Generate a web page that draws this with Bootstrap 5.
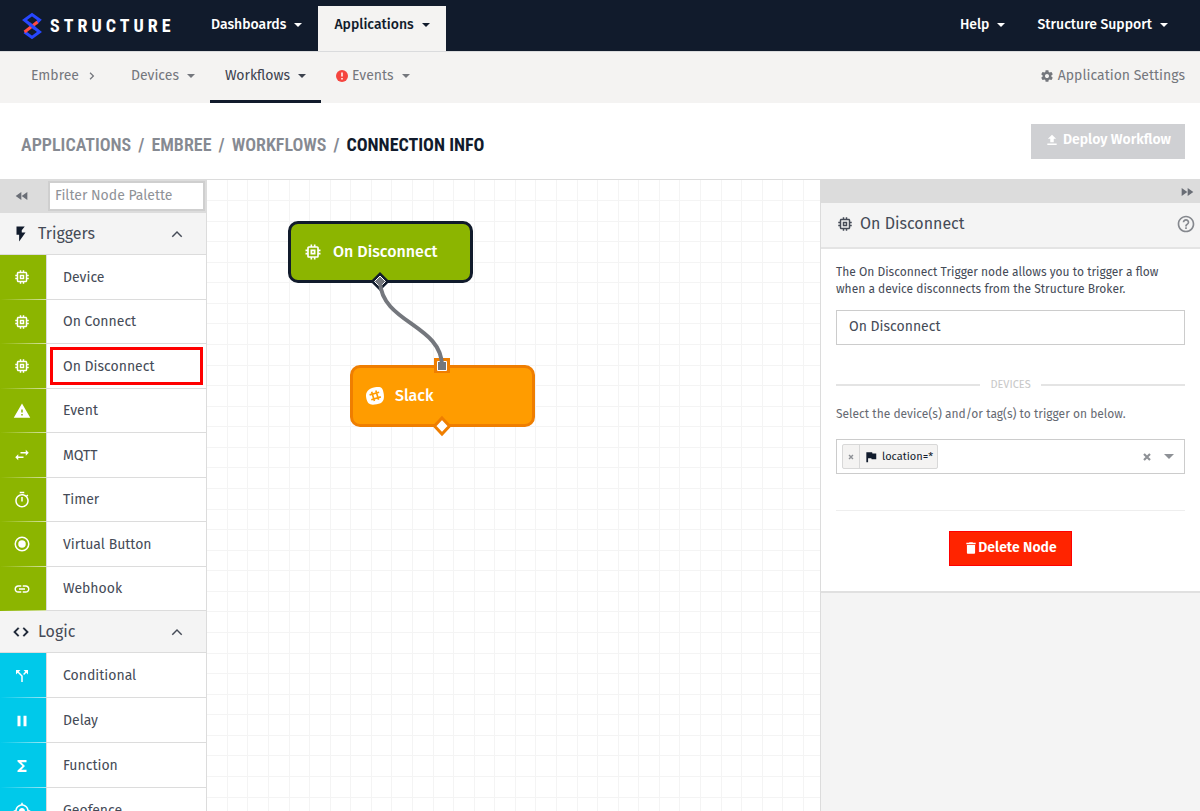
<!DOCTYPE html>
<html lang="en">
<head>
<meta charset="utf-8">
<meta name="viewport" content="width=device-width, initial-scale=1">
<title>Connection Info – Structure</title>
<link href="https://cdn.jsdelivr.net/npm/bootstrap@5.3.0/dist/css/bootstrap.min.css" rel="stylesheet">
<style>
  :root { --ink: #111b2c; --text: #454b57; --line: #dcdcdc; --green: #8cb500; --cyan: #00c9ea; }
  body { font-family: "Fira Sans", "Noto Sans", sans-serif; font-size: 14px; line-height: 20px; color: var(--text); }
  a { color: inherit; text-decoration: none; }
  .icon { width: 18px; height: 18px; fill: currentColor; flex: none; }
  .icon-sm { width: 16px; height: 16px; }
  .icon-xs { width: 14px; height: 14px; }
  .icon-lg { width: 20px; height: 20px; }

  .topbar { height: 51px; background: var(--ink); color: #fff; font-weight: 500; }
  .brand { width: 195px; padding-left: 22px; }
  .brand-name { font-family: "Roboto Condensed", "Roboto", sans-serif; font-weight: 700; font-size: 18px; letter-spacing: 4px; }
  .topbar .nav-link, .subbar .nav-link { padding: 0 15px; color: inherit; display: flex; align-items: center; }
  .topbar .nav-link { height: 45px; padding: 0 16px 8px; }
  .topbar .nav-link.active { background: #f4f3f2; color: var(--ink); }
  .caret::after { content: ""; margin-left: 8px; border: 4px solid transparent; border-top-color: currentColor; border-bottom: 0; }

  .subbar { height: 52px; background: #f4f3f2; color: #74777d; border-top: 1px solid #dadbdd; }
  .subbar .nav-link { height: 51px; border-bottom: 3px solid transparent; }
  .subbar .nav-link.active { color: #3c424e; border-color: var(--ink); }

  .titlebar { height: 76px; padding: 0 15px 0 21px; }
  .trail { font-family: "Roboto Condensed", "Fira Sans Condensed", "Open Sans Condensed", "Fira Sans", "Noto Sans", sans-serif; font-weight: 600; font-size: 18px; color: #868a92; --bs-breadcrumb-divider: "/"; --bs-breadcrumb-item-padding-x: 7px; --bs-breadcrumb-divider-color: #868a92; }
  .trail .active { color: var(--ink); font-weight: 700; }
  .action { border: 0; border-radius: 0; height: 35px; color: #fff; font-size: 14px; font-weight: 600; line-height: 20px; padding: 0 14px 2px; }
  .action-deploy, .action-deploy:disabled { background: #cfd0d3; color: #fff; opacity: 1; }
  .action-delete, .action-delete:hover { background: #ff2400; color: #fff; border: 1px solid #f00; }

  .workspace { border-top: 1px solid var(--line); min-height: 0; }
  .palette { width: 207px; border-right: 1px solid var(--line); }
  .filter { height: 33px; background: #dcdcdc; padding: 1px 1px 2px 0; }
  .toggle { border: 0; background: none; padding: 0; color: #6a6e76; display: inline-flex; }
  .filter .toggle { padding: 0 18px 0 14px; }
  .filter .form-control { height: 30px; padding: 0 6px 2px 5px; border: 2px solid #cfcfcf; border-radius: 0; font-size: 14px; }
  .filter .form-control::placeholder { color: #8f9297; }
  .group-head { height: 42px; background: #f4f4f4; border: 0; border-bottom: 1px solid var(--line); padding: 0 20px 0 12px; font-size: 16px; color: var(--text); }
  .group-head .icon:first-child { color: var(--ink); }
  .triggers .group-list { height: 356px; }
  .tile { flex: 1 0 44px; border-bottom: 1px solid var(--line); }
  .logic .tile { flex-basis: 45px; }
  .tile-icon { width: 47px; color: #fff; margin-bottom: -1px; border-right: 1px solid var(--line); padding-right: 2px; }
  .tile-label { margin: 3px; border: 3px solid transparent; padding: 2px 0 0 10px; }
  .tile-label.marked { border-color: #f00; }
  .triggers .tile-icon { background: linear-gradient(var(--green), var(--green)) top / 100% calc(100% - 1px) no-repeat, linear-gradient(90deg, var(--green), #d5e3a4); }
  .logic .tile-icon { background: linear-gradient(var(--cyan), var(--cyan)) top / 100% calc(100% - 1px) no-repeat, linear-gradient(90deg, var(--cyan), #a4e8f4); }

  .canvas { background: #fff; min-width: 0; }
  .flow-node { width: 185px; height: 62px; border: 3px solid; border-radius: 10px; color: #fff; font-size: 16px; font-weight: 500; padding: 0 12px; gap: 10px; }
  .flow-node .icon { width: 20px; height: 20px; }
  .node-trigger { left: 81px; top: 41px; background: var(--green); border-color: var(--ink); }
  .node-slack { left: 143px; top: 185px; background: #ff9c00; border-color: #ef7e00; }

  .inspector { width: 380px; background: #f4f4f4; border-left: 1px solid var(--line); }
  .inspector-bar { height: 23px; background: #dcdcdc; padding: 0 5px; }
  .inspector-head { height: 46px; border-bottom: 2px solid #e4e4e4; padding: 0 4px 3px 15px; gap: 6px; }
  .inspector-title { font-size: 16px; line-height: 20px; margin: 0; font-weight: 400; }
  .inspector-body { background: #fff; border-bottom: 2px solid #e0e0e0; padding: 15px 15px 25px; }
  .help-link { color: #85888e; }
  .copy { font-size: 12px; line-height: 17px; }
  .node-name { height: 35px; border: 1px solid #ccc; border-radius: 0; padding: 0 12px 2px; font-size: 14px; color: var(--text); }
  .divider { color: #c8c8c8; font-size: 11px; line-height: 16px; gap: 10px; }
  .divider::before, .divider::after { content: ""; flex: 1; border-top: 2px solid #e4e4e4; }
  .hint { margin: 13px 0 16px; color: #666a72; }
  .tags { height: 35px; border: 1px solid #ccc; padding: 0 10px 0 5px; color: #8e9196; }
  .tag { background: #f4f3f2; border: 1px solid #d8d8d8; border-radius: 2px; height: 25px; font-size: 11px; color: var(--ink); }
  .tag .toggle { width: 17px; height: 100%; border-right: 1px solid #d8d8d8; align-items: center; justify-content: center; }
  .tags .toggle { color: #8e9196; }
  .rule { border-top: 1px solid #eee; margin: 36px 0 20px; }
</style>
</head>
<body class="vh-100 d-flex flex-column overflow-hidden bg-white">

<svg class="d-none" xmlns="http://www.w3.org/2000/svg">
  <symbol id="chip" viewBox="0 0 24 24"><path d="M15 9H9v6h6V9zm-2 4h-2v-2h2v2zm8-2V9h-2V7c0-1.100-.9-2-2-2h-2V3h-2v2h-2V3H9v2H7c-1.100 0-2 .9-2 2v2H3v2h2v2H3v2h2v2c0 1.100.9 2 2 2h2v2h2v-2h2v2h2v-2h2c1.100 0 2-.9 2-2v-2h2v-2h-2v-2h2zm-4 6H7V7h10v10z"/></symbol>
  <symbol id="warning" viewBox="0 0 24 24"><path d="M1 21h22L12 2 1 21zm12-3h-2v-2h2v2zm0-4h-2v-4h2v4z"/></symbol>
  <symbol id="swap" viewBox="0 0 24 24"><path d="M6.990 11L3 15l3.990 4v-3H14v-2H6.990v-3zM21 9l-3.990-4v3H10v2h7.010v3L21 9z"/></symbol>
  <symbol id="timer" viewBox="0 0 24 24"><path d="M15 1H9v2h6V1zm-4 13h2V8h-2v6zm8.030-6.610l1.420-1.420c-.43-.51-.9-.99-1.410-1.410l-1.420 1.420C16.070 4.740 14.120 4 12 4c-4.970 0-9 4.030-9 9s4.020 9 9 9 9-4.030 9-9c0-2.120-.74-4.070-1.970-5.610zM12 20c-3.870 0-7-3.130-7-7s3.130-7 7-7 7 3.130 7 7-3.130 7-7 7z"/></symbol>
  <symbol id="radio" viewBox="0 0 24 24"><circle cx="12" cy="12" r="5"/><circle cx="12" cy="12" r="9" fill="none" stroke="currentColor" stroke-width="2"/></symbol>
  <symbol id="link" viewBox="0 0 24 24"><path d="M3.900 12c0-1.710 1.390-3.100 3.100-3.100h4V7H7c-2.760 0-5 2.240-5 5s2.240 5 5 5h4v-1.900H7c-1.710 0-3.100-1.390-3.100-3.100zM8 13h8v-2H8v2zm9-6h-4v1.900h4c1.710 0 3.100 1.390 3.100 3.100s-1.390 3.100-3.100 3.100h-4V17h4c2.760 0 5-2.240 5-5s-2.240-5-5-5z"/></symbol>
  <symbol id="split" viewBox="0 0 24 24"><path d="M14 4l2.290 2.290-2.880 2.880 1.420 1.420 2.880-2.880L20 10V4zm-4 0H4v6l2.290-2.290 4.710 4.700V20h2v-8.410l-5.290-5.300z"/></symbol>
  <symbol id="pause" viewBox="0 0 24 24"><path d="M6 19h4V5H6v14zm8-14v14h4V5h-4z"/></symbol>
  <symbol id="sigma" viewBox="0 0 24 24"><path d="M18 4H6v2l6.500 6L6 18v2h12v-3h-7l5-5-5-5h7z"/></symbol>
  <symbol id="target" viewBox="0 0 24 24"><path d="M12 8c-2.210 0-4 1.790-4 4s1.790 4 4 4 4-1.790 4-4-1.790-4-4-4zm8.940 3c-.46-4.170-3.770-7.480-7.940-7.940V1h-2v2.060C6.830 3.520 3.520 6.830 3.060 11H1v2h2.060c.46 4.170 3.770 7.480 7.940 7.940V23h2v-2.060c4.170-.46 7.480-3.770 7.940-7.940H23v-2h-2.060zM12 19c-3.870 0-7-3.130-7-7s3.130-7 7-7 7 3.130 7 7-3.130 7-7 7z"/></symbol>
  <symbol id="bolt" viewBox="0 0 24 24"><path d="M6 2v11h3.500v9L18 10h-5V7l4-5z"/></symbol>
  <symbol id="code" viewBox="0 0 24 24"><path d="M9.400 16.600L4.800 12l4.600-4.600L8 6l-6 6 6 6 1.400-1.400zm5.200 0l4.600-4.600-4.600-4.600L16 6l6 6-6 6-1.400-1.400z" stroke="currentColor" stroke-width=".5"/></symbol>
  <symbol id="less" viewBox="0 0 24 24"><path d="M12 8l-7 7 1.410 1.410L12 10.830l5.590 5.580L19 15z"/></symbol>
  <symbol id="right" viewBox="0 0 24 24"><path d="M10 7L8.800 8.200 12.600 12l-3.800 3.800L10 17l5-5z"/></symbol>
  <symbol id="rewind" viewBox="0 0 24 24"><path d="M11 18V6l-8.500 6 8.500 6zm.5-6l8.500 6V6l-8.500 6z"/></symbol>
  <symbol id="forward" viewBox="0 0 24 24"><path d="M4 18l8.500-6L4 6v12zm9-12v12l8.500-6L13 6z"/></symbol>
  <symbol id="upload" viewBox="0 0 24 24"><path d="M9 16h6v-6h4l-7-7-7 7h4zm-5 2h16v2.500H4z"/></symbol>
  <symbol id="trash" viewBox="0 0 24 24"><path d="M5 20c0 1.100.9 2 2 2h10c1.100 0 2-.9 2-2V7H5v13zM20 3h-4.500l-1-1h-5l-1 1H4v2.500h16V3z"/></symbol>
  <symbol id="flag" viewBox="0 0 24 24"><path d="M14.400 6L14 4H4v17h3v-7h5.600l.4 2h8V6z"/></symbol>
  <symbol id="help" viewBox="0 0 24 24"><path d="M11 18h2v-2h-2v2zm1-16C6.480 2 2 6.480 2 12s4.480 10 10 10 10-4.480 10-10S17.520 2 12 2zm0 18c-4.410 0-8-3.590-8-8s3.590-8 8-8 8 3.590 8 8-3.590 8-8 8zm0-14c-2.210 0-4 1.790-4 4h2c0-1.100.9-2 2-2s2 .9 2 2c0 2-3 1.750-3 5h2c0-2.250 3-2.500 3-5 0-2.210-1.790-4-4-4z"/></symbol>
  <symbol id="gear" viewBox="0 0 24 24"><path d="M19.430 12.980c.04-.32.07-.64.07-.98s-.03-.66-.07-.98l2.110-1.650c.19-.15.24-.42.12-.64l-2-3.460c-.12-.22-.39-.3-.61-.22l-2.490 1c-.52-.4-1.080-.73-1.690-.98l-.38-2.650C14.460 2.180 14.250 2 14 2h-4c-.25 0-.46.18-.49.42l-.38 2.650c-.61.25-1.170.59-1.690.98l-2.490-1c-.23-.09-.49 0-.61.22l-2 3.460c-.13.22-.07.49.12.64l2.110 1.650c-.04.32-.07.65-.07.98s.03.66.07.98l-2.110 1.650c-.19.15-.24.42-.12.64l2 3.460c.12.22.39.3.61.22l2.490-1c.52.4 1.080.73 1.690.98l.38 2.650c.03.24.24.42.49.42h4c.25 0 .46-.18.49-.42l.38-2.650c.61-.25 1.170-.59 1.690-.98l2.490 1c.23.09.49 0 .61-.22l2-3.460c.12-.22.07-.49-.12-.64l-2.110-1.650zM12 15.500c-1.930 0-3.500-1.570-3.500-3.500s1.570-3.500 3.500-3.500 3.500 1.570 3.500 3.500-1.570 3.500-3.500 3.500z"/></symbol>
  <symbol id="cross" viewBox="0 0 24 24"><path d="M5 5l14 14M19 5L5 19" stroke="currentColor" stroke-width="5"/></symbol>
  <symbol id="slack" viewBox="0 0 24 24"><path d="M12 1.500c7.500-1 9.500.5 10.500 8s-1 11-8.500 12.500S3 22 1.500 14.500 4.500 2.500 12 1.500z"/><path d="M8 7l3.300 11M13 5.500l3.300 11M5.500 10.700L17 7.500M7.500 16.500L19 13" fill="none" stroke="#ff9c00" stroke-width="2"/></symbol>
</svg>

<header class="topbar d-flex flex-shrink-0">
  <a href="#" class="brand d-flex align-items-center">
    <svg class="flex-shrink-0" width="20" height="28" viewBox="0 0 20 28" fill="none" stroke-width="3" aria-hidden="true">
      <path d="M14 11.500L17.500 8 10 2.500 2.500 8l7.500 6M10 14l7.500 6-7.500 5.500L2.500 20" stroke="#2747ff"/>
      <path d="M15.500 10L2.500 20" stroke="#ff4a42"/>
      <path d="M7 11.500l6 5" stroke="#2747ff"/>
    </svg>
    <span class="brand-name ms-2">STRUCTURE</span>
  </a>
  <nav class="nav align-items-end flex-fill flex-nowrap" aria-label="Main">
    <a class="nav-link caret" href="#">Dashboards</a>
    <a class="nav-link caret active" href="#">Applications</a>
    <a class="nav-link caret ms-auto" href="#">Help</a>
    <a class="nav-link caret me-3" href="#">Structure Support</a>
  </nav>
</header>

<nav class="subbar nav flex-nowrap flex-shrink-0 ps-3" aria-label="Application">
  <a class="nav-link" href="#">Embree<svg class="icon ms-1"><use href="#right"/></svg></a>
  <a class="nav-link caret" href="#">Devices</a>
  <a class="nav-link caret active" href="#">Workflows</a>
  <a class="nav-link caret" href="#"><svg class="me-1" width="12" height="12" viewBox="0 0 12 12"><circle cx="6" cy="6" r="6" fill="#f5453f"/><path d="M6 2.500v4M6 8v1.500" stroke="#fff" stroke-width="1.500"/></svg>Events</a>
  <a class="nav-link ms-auto" href="#"><svg class="icon icon-xs me-1"><use href="#gear"/></svg>Application Settings</a>
</nav>

<div class="titlebar d-flex align-items-center justify-content-between flex-shrink-0">
  <nav aria-label="breadcrumb">
    <ol class="breadcrumb trail mb-0 mt-2">
      <li class="breadcrumb-item"><a href="#">APPLICATIONS</a></li>
      <li class="breadcrumb-item"><a href="#">EMBREE</a></li>
      <li class="breadcrumb-item"><a href="#">WORKFLOWS</a></li>
      <li class="breadcrumb-item active" aria-current="page">CONNECTION INFO</li>
    </ol>
  </nav>
  <button class="btn action action-deploy d-flex align-items-center gap-1" type="button" disabled><svg class="icon icon-xs"><use href="#upload"/></svg>Deploy Workflow</button>
</div>

<main class="workspace d-flex flex-fill overflow-hidden">
  <aside class="palette flex-shrink-0 overflow-hidden">
    <div class="filter d-flex align-items-center">
      <button class="toggle" type="button" aria-label="Collapse palette"><svg class="icon icon-sm"><use href="#rewind"/></svg></button>
      <input class="form-control" type="search" placeholder="Filter Node Palette" aria-label="Filter Node Palette">
    </div>
    <section class="triggers">
      <button class="group-head w-100 d-flex align-items-center gap-2" type="button"><svg class="icon"><use href="#bolt"/></svg>Triggers<svg class="icon ms-auto"><use href="#less"/></svg></button>
      <div class="group-list d-flex flex-column">
        <div class="tile d-flex"><span class="tile-icon d-flex align-items-center justify-content-center"><svg class="icon"><use href="#chip"/></svg></span><span class="tile-label flex-fill d-flex align-items-center">Device</span></div>
        <div class="tile d-flex"><span class="tile-icon d-flex align-items-center justify-content-center"><svg class="icon"><use href="#chip"/></svg></span><span class="tile-label flex-fill d-flex align-items-center">On Connect</span></div>
        <div class="tile d-flex"><span class="tile-icon d-flex align-items-center justify-content-center"><svg class="icon"><use href="#chip"/></svg></span><span class="tile-label marked flex-fill d-flex align-items-center">On Disconnect</span></div>
        <div class="tile d-flex"><span class="tile-icon d-flex align-items-center justify-content-center"><svg class="icon"><use href="#warning"/></svg></span><span class="tile-label flex-fill d-flex align-items-center">Event</span></div>
        <div class="tile d-flex"><span class="tile-icon d-flex align-items-center justify-content-center"><svg class="icon"><use href="#swap"/></svg></span><span class="tile-label flex-fill d-flex align-items-center">MQTT</span></div>
        <div class="tile d-flex"><span class="tile-icon d-flex align-items-center justify-content-center"><svg class="icon"><use href="#timer"/></svg></span><span class="tile-label flex-fill d-flex align-items-center">Timer</span></div>
        <div class="tile d-flex"><span class="tile-icon d-flex align-items-center justify-content-center"><svg class="icon"><use href="#radio"/></svg></span><span class="tile-label flex-fill d-flex align-items-center">Virtual Button</span></div>
        <div class="tile d-flex"><span class="tile-icon d-flex align-items-center justify-content-center"><svg class="icon"><use href="#link"/></svg></span><span class="tile-label flex-fill d-flex align-items-center">Webhook</span></div>
      </div>
    </section>
    <section class="logic">
      <button class="group-head w-100 d-flex align-items-center gap-2" type="button"><svg class="icon"><use href="#code"/></svg>Logic<svg class="icon ms-auto"><use href="#less"/></svg></button>
      <div class="group-list d-flex flex-column">
        <div class="tile d-flex"><span class="tile-icon d-flex align-items-center justify-content-center"><svg class="icon"><use href="#split"/></svg></span><span class="tile-label flex-fill d-flex align-items-center">Conditional</span></div>
        <div class="tile d-flex"><span class="tile-icon d-flex align-items-center justify-content-center"><svg class="icon"><use href="#pause"/></svg></span><span class="tile-label flex-fill d-flex align-items-center">Delay</span></div>
        <div class="tile d-flex"><span class="tile-icon d-flex align-items-center justify-content-center"><svg class="icon"><use href="#sigma"/></svg></span><span class="tile-label flex-fill d-flex align-items-center">Function</span></div>
        <div class="tile d-flex"><span class="tile-icon d-flex align-items-center justify-content-center"><svg class="icon"><use href="#target"/></svg></span><span class="tile-label flex-fill d-flex align-items-center">Geofence</span></div>
      </div>
    </section>
  </aside>

  <section class="canvas position-relative flex-fill overflow-hidden" aria-label="Workflow canvas">
    <svg class="w-100 h-100 d-block" aria-hidden="true">
      <defs><pattern id="grid" width="144" height="144" patternUnits="userSpaceOnUse"><path d="M20 0h1v144h-1zM40 0h1v144h-1zM61 0h1v144h-1zM82 0h1v144h-1zM102 0h1v144h-1zM123 0h1v144h-1zM143 0h1v144h-1zM0 20h144v1H0zM0 41h144v1H0zM0 61h144v1H0zM0 82h144v1H0zM0 102h144v1H0zM0 123h144v1H0zM0 143h144v1H0z" fill="#f4f4f4"/></pattern></defs>
      <rect width="100%" height="100%" fill="url(#grid)"/>
    </svg>
    <div class="flow-node node-trigger position-absolute d-flex align-items-center"><svg class="icon"><use href="#chip"/></svg>On Disconnect</div>
    <div class="flow-node node-slack position-absolute d-flex align-items-center"><svg class="icon"><use href="#slack"/></svg>Slack</div>
    <svg class="position-absolute top-0 start-0 w-100 h-100" aria-hidden="true">
      <path d="M173 92l9.500 9.500-9.500 9.500-9.500-9.500z" fill="#111b2c"/>
      <path d="M173 96l5.500 5.500-5.500 5.500-5.500-5.500z" fill="#74777d" stroke="#fff"/>
      <path d="M227 178h16v15h-16z" fill="#ef7e00"/>
      <path d="M230.500 181.500h9v9h-9z" fill="#74777d" stroke="#fff"/>
      <path d="M173 102C175 143 235 145 235 186" fill="none" stroke="#74777d" stroke-width="4"/>
      <path d="M235 238l7.500 8-7.500 8-7.500-8z" fill="#fff" stroke="#ef7e00" stroke-width="3"/>
    </svg>
  </section>

  <aside class="inspector flex-shrink-0" aria-label="Node settings">
    <div class="inspector-bar d-flex align-items-center justify-content-end"><button class="toggle" type="button" aria-label="Collapse panel"><svg class="icon icon-sm"><use href="#forward"/></svg></button></div>
    <div class="inspector-head d-flex align-items-center">
      <svg class="icon"><use href="#chip"/></svg>
      <h2 class="inspector-title">On Disconnect</h2>
      <a class="help-link ms-auto d-flex" href="#" aria-label="Help"><svg class="icon icon-lg"><use href="#help"/></svg></a>
    </div>
    <div class="inspector-body">
      <label class="copy mb-2 pb-1 d-block" for="nodeName">The On Disconnect Trigger node allows you to trigger a flow when a device disconnects from the Structure Broker.</label>
      <input class="form-control node-name" id="nodeName" type="text" value="On Disconnect">
      <div class="divider d-flex align-items-center mt-4 pt-2">DEVICES</div>
      <p class="copy hint">Select the device(s) and/or tag(s) to trigger on below.</p>
      <div class="tags d-flex align-items-center">
        <span class="tag d-flex align-items-center"><button class="toggle" type="button" aria-label="Remove location tag"><svg class="icon" viewBox="-20 -20 64 64"><use href="#cross" width="24" height="24"/></svg></button><svg class="icon icon-xs mx-1"><use href="#flag"/></svg><span class="pe-1">location=*</span></span>
        <button class="toggle ms-auto me-1" type="button" aria-label="Clear all"><svg class="icon" viewBox="-9 -9 42 42"><use href="#cross" width="24" height="24"/></svg></button>
        <button class="toggle ms-1" type="button" aria-label="Show options"><svg width="10" height="5" viewBox="0 0 10 5" fill="currentColor"><path d="M0 0h10L5 5z"/></svg></button>
      </div>
      <div class="rule"></div>
      <button class="btn action action-delete d-flex align-items-center mx-auto" type="button"><svg class="icon icon-xs"><use href="#trash"/></svg>Delete Node</button>
    </div>
  </aside>
</main>

<script src="https://cdn.jsdelivr.net/npm/bootstrap@5.3.0/dist/js/bootstrap.bundle.min.js"></script>
</body>
</html>
